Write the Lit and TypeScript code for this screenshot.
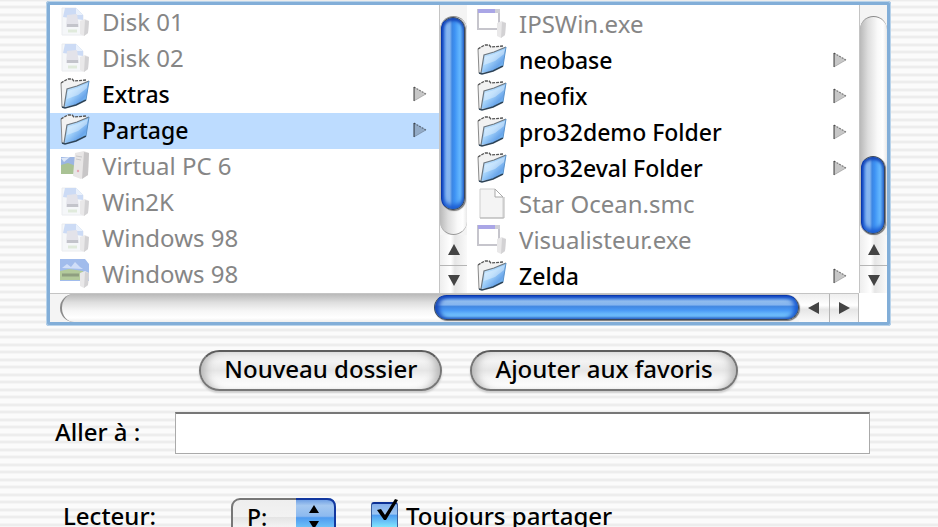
import { LitElement, html, css, svg, nothing } from "lit";
import { customElement, property } from "lit/decorators.js";

type IconKind = "folder" | "disk" | "machine" | "picture" | "program" | "file";

interface Entry {
  name: string;
  icon: IconKind;
  selected?: boolean;
}

const LEFT: Entry[] = [
  { name: "Disk 01", icon: "disk" },
  { name: "Disk 02", icon: "disk" },
  { name: "Extras", icon: "folder" },
  { name: "Partage", icon: "folder", selected: true },
  { name: "Virtual PC 6", icon: "machine" },
  { name: "Win2K", icon: "disk" },
  { name: "Windows 98", icon: "disk" },
  { name: "Windows 98", icon: "picture" },
];

const RIGHT: Entry[] = [
  { name: "IPSWin.exe", icon: "program" },
  { name: "neobase", icon: "folder" },
  { name: "neofix", icon: "folder" },
  { name: "pro32demo Folder", icon: "folder" },
  { name: "pro32eval Folder", icon: "folder" },
  { name: "Star Ocean.smc", icon: "file" },
  { name: "Visualisteur.exe", icon: "program" },
  { name: "Zelda", icon: "folder" },
];

const tower = svg`
  <path d="M20 15l5-2 4 2-1 12-4 3-4-2z" fill="#e9e8e9"/>
  <path d="M25 14l4 1-1 12-4 3z" fill="#d3d2d4"/>`;

const ICONS = {
  folder: svg`
    <path d="M2 29L1 5l3-2 4-2h4l2 2 12-1v4L9 10 5 30z" fill="#f2f2f2"/>
    <path d="M2 29L1 5" fill="none" stroke="#8a8a8a"/>
    <path d="M1 5l3-2 4-2h4l2 2 12-1" fill="none" stroke="#555" stroke-width="1.3" stroke-dasharray="3 1"/>
    <path d="M4 29L7 11l10-3L29 3l-3 19-10 5z" fill="url(#folderFill)"/>
    <path d="M8 13l9-3 11-5-1 5-9 7-11 4z" fill="#fff" opacity=".35"/>
    <path d="M4 29L7 11l10-3L29 3" fill="none" stroke="#6d7780" stroke-width="1.2"/>
    <path d="M2 29l3 1 11-3 10-5" fill="none" stroke="#2d4357" stroke-width="1.4"/>
    <path d="M26 22l3-19" fill="none" stroke="#5a93cc" stroke-width="1"/>`,
  disk: svg`
    <path d="M2 2h14l7 7v20H2z" fill="#f5f7f9" stroke="#eaecef" stroke-width="1"/>
    <path d="M5 2h11l7 7v5L3 11z" fill="#ccdbf5"/>
    <path d="M16 2v7h7z" fill="#eaf1fc"/>
    <path d="M7 9l10-1 2 13H6z" fill="#e3e3ea"/>
    <path d="M7 18h11v3H7z" fill="#c3c4cb"/>
    <path d="M8 25h9" stroke="#e0eadc" stroke-width="3"/>
    ${tower}`,
  machine: svg`
    <path d="M1 7h15v17H1z" fill="#9bb5e3"/>
    <path d="M1 15l7-2 8 3v8H1z" fill="#a9c294"/>
    <path d="M1 8l9-1-6 5z" fill="#dbe6f7"/>
    <path d="M15 3l9-2 5 2-1 22-7 4-8-3z" fill="#e8e6e6"/>
    <path d="M24 2l5 1-1 22-6 4z" fill="#c8c6c7"/>
    <path d="M16 6l6 1M16 9l5 1" stroke="#c9c8c9"/>
    <circle cx="18" cy="21" r="1.2" fill="#e6a5b2"/>`,
  picture: svg`
    <path d="M0 1h25l4 5v17H0z" fill="#a1bcec"/>
    <path d="M0 13l9-2 14 2v9H0z" fill="#b3ca9b"/>
    <path d="M2 10l5-4 4 3 4-5 5 5 3 2z" fill="#d0def8"/>
    <path d="M2 17h17" stroke="#8f9f80" stroke-width="3"/>
    ${tower}`,
  program: svg`
    <path d="M1 2h21v19H1z" fill="#fff" stroke="#c6c5cc" stroke-width="2"/>
    <path d="M1 1h17v4H1z" fill="#aaa6e6"/>
    <path d="M18 1h5v4h-5z" fill="#cfcfd6"/>
    ${tower}`,
  file: svg`
    <path d="M3 1h15l8 8v21H3z" fill="#f4f4f4" stroke="#cdcdcd" stroke-width="1"/>
    <path d="M18 1v8h8z" fill="#fff" stroke="#a9a9a9" stroke-width="1"/>
    <path d="M3 30h24V9" fill="none" stroke="#b5b5b5" stroke-width="1"/>`,
};

@customElement("file-column")
export class FileColumn extends LitElement {
  @property({ attribute: false }) entries: Entry[] = [];
  @property() label = "";

  static styles = css`
    :host { display: block; min-width: 0; background: #fff; }
    .list { list-style: none; margin: 0; padding: 0; }
    .row {
      display: flex; align-items: center; box-sizing: border-box; width: 100%; height: 36px;
      margin: 0; padding: 0 8px 2px 10px; border: 0; background: none; text-align: left;
      font: 500 23px/32px "Noto Sans", "Open Sans", sans-serif; color: #000;
    }
    .row:disabled { color: #868686; font-weight: 400; font-size: 24px; }
    .selected { background: #bddcff; }
    .icon { width: 30px; height: 32px; flex: none; margin-right: 12px; }
    .name { flex: 1; white-space: nowrap; overflow: hidden; }
    .arrow { width: 20px; height: 16px; flex: none; }
  `;

  render() {
    return html`<ul class="list" aria-label=${this.label}>
      ${this.entries.map((e) => {
        const open = e.icon === "folder";
        return html`<li>
          <button class="row ${e.selected ? "selected" : ""}" ?disabled=${!open} aria-current=${e.selected ? "true" : nothing}>
            <svg class="icon" viewBox="0 0 30 32" aria-hidden="true">
              <defs>
                <linearGradient id="folderFill" x1="0" y1="0" x2="1" y2="1">
                  <stop offset=".1" stop-color="#d5eeff"/>
                  <stop offset=".45" stop-color="#a3d2fb"/>
                  <stop offset=".7" stop-color="#69a5ea"/>
                  <stop offset="1" stop-color="#8fe0ff"/>
                </linearGradient>
              </defs>
              ${ICONS[e.icon]}
            </svg>
            <span class="name">${e.name}</span>
            ${open
              ? html`<svg class="arrow" viewBox="0 0 20 16" aria-hidden="true">
                  <path d="M3 1l12 7-12 7z" fill="#000" fill-opacity=".22"/>
                  <path d="M3 1v14" stroke="#000" stroke-opacity=".5" stroke-width="1.5"/>
                  <path d="M3 1l12 7" stroke="#000" stroke-opacity=".45" stroke-width="1.3" stroke-dasharray="2 1"/>
                  <path d="M3 15l12-7" stroke="#000" stroke-opacity=".2"/>
                </svg>`
              : nothing}
          </button>
        </li>`;
      })}
    </ul>`;
  }
}

@customElement("aqua-scrollbar")
export class AquaScrollbar extends LitElement {
  @property({ reflect: true }) direction: "vertical" | "horizontal" = "vertical";
  /** Thumb position and length, in percent of the track. */
  @property({ type: Number }) start = 0;
  @property({ type: Number }) size = 50;

  static styles = css`
    :host { display: flex; flex-direction: column; box-sizing: border-box; width: 28px; height: 100%; background: #f4f4f4; border-left: 1px solid #c4c4c4; }
    :host([direction="horizontal"]) { flex-direction: row; width: auto; height: 29px; border-left: 0; border-top: 1px solid #c4c4c4; }
    .track { flex: 1; margin-top: 11px; position: relative; border-radius: 14px; border-top: 1px solid #8b8b8b; border-bottom: 1px solid #999; background: linear-gradient(90deg, #b9b9b9, #dedede 30%, #f9f9f9 65%, #fff 85%, #e9e9e9); }
    :host([direction="horizontal"]) .track { margin: 0 0 0 10px; border: 0; border-left: 2px solid #8b8b8b; background: linear-gradient(#b9b9b9, #dedede 30%, #f6f6f6 60%, #fff 85%, #eee); }
    .thumb {
      position: absolute; box-sizing: border-box; left: 1px; right: 2px; border-radius: 13px; border: 1px solid #39465b; border-left-color: #0838ad;
      background: linear-gradient(90deg, #0d3bc0, #5d96e6 12%, #86b5f0 22%, #83b4ef 36%, #3c86e3 46%, #3d92f4 58%, #67baff 82%, #4b8ed6);
      box-shadow: inset 0 3px 3px #1748b9, inset 0 -4px 4px #1c5dd2, 1px 1px 1px #777;
    }
    :host([direction="horizontal"]) .thumb {
      left: auto; right: auto; top: 1px; bottom: 2px; border-color: #0838ad #39465b #39465b;
      background: linear-gradient(#0d3bc0, #5d96e6 12%, #90bcee 22%, #86b5ef 38%, #4288e2 46%, #4a99f5 62%, #7bcbff 88%, #5da4e0);
      box-shadow: inset 4px 0 4px #1748b9, inset -4px 0 4px #1c5dd2, 1px 1px 1px #777;
    }
    .step { display: flex; align-items: center; justify-content: center; padding: 0; margin: 0; border: 0; width: 100%; height: 30px; background: linear-gradient(90deg, #eee, #fff 40%, #e6e6e6 55%, #fafafa); }
    .step + .step { border-top: 1px solid #b5b5b5; border-bottom: 1px solid #ccc; }
    :host([direction="horizontal"]) .step { width: 30px; height: 100%; background: linear-gradient(#eee, #fff 40%, #e6e6e6 55%, #fafafa); }
    :host([direction="horizontal"]) .step + .step { border-top: 0; border-bottom: 0; border-left: 1px solid #b5b5b5; border-right: 1px solid #bbb; }
    .glyph { width: 12px; height: 12px; }
  `;

  render() {
    const v = this.direction === "vertical";
    const place = v
      ? `top:${this.start}%;height:${this.size}%`
      : `left:${this.start}%;width:${this.size}%`;
    return html`
      <div class="track"><div class="thumb" style=${place}></div></div>
      <button class="step" aria-label=${v ? "Haut" : "Gauche"}>
        <svg class="glyph" viewBox="0 0 12 12"><path fill="#444" d=${v ? "M6 0l6 11H0z" : "M0 6l11-6v12z"}/></svg>
      </button>
      <button class="step" aria-label=${v ? "Bas" : "Droite"}>
        <svg class="glyph" viewBox="0 0 12 12"><path fill="#444" d=${v ? "M6 12L0 1h12z" : "M12 6L1 0v12z"}/></svg>
      </button>`;
  }
}

@customElement("app-root")
export class AppRoot extends LitElement {
  static styles = css`
    :host {
      display: block; box-sizing: border-box; height: 100vh; overflow: hidden; padding: 1px 47px 0 46px;
      font: 500 24px/32px "Noto Sans", "Open Sans", sans-serif; color: #000;
      background: repeating-linear-gradient(#ededed 0 1px, #f5f5f5 1px 2px, #fbfbfb 2px 5px, #f5f5f5 5px 6px, #ededed 6px 8px, #f5f5f5 8px 9px, #fbfbfb 9px 13px, #f4f4f4 13px 14px, #ededed 14px 15px);
    }
    .browser { border: 4px solid #82aed8; border-radius: 3px; background: #fff; outline: 1px solid #b9d3ea; outline-offset: -1px; }
    .columns { display: grid; grid-template-columns: minmax(0, 389fr) 28px minmax(0, 392fr) 28px; height: 288px; overflow: hidden; }
    .second { padding-top: 2px; }
    .bottom { display: grid; grid-template-columns: 1fr 28px; }
    .actions { display: flex; justify-content: center; gap: 28px; margin-top: 24px; }
    .push {
      box-sizing: border-box; height: 41px; padding: 0 23px 4px; border: 2px solid #777; border-top-color: #5c5c5c; border-radius: 21px; font: inherit; color: #000; white-space: nowrap;
      background: linear-gradient(#e6e6e6, #f3f3f3 25%, #e6e6e6 50%, #f5f5f5 70%, #fff);
      box-shadow: inset 9px 0 8px -5px #b5b5b5, inset -9px 0 8px -5px #b5b5b5, 0 2px 2px #ccc;
    }
    .goto { display: flex; align-items: center; margin: 21px 21px 0 9px; }
    .goto-label { width: 120px; flex: none; padding-bottom: 2px; }
    .path { flex: 1; min-width: 0; box-sizing: border-box; height: 42px; padding: 0 8px; font: inherit; background: #fff; border: 1px solid #aaa; border-top: 2px solid #777; border-radius: 0; }
    .share { display: flex; align-items: center; margin: 44px 0 0 17px; height: 38px; }
    .drive-label { width: 168px; flex: none; padding-bottom: 2px; }
    .drive { position: relative; width: 105px; height: 38px; margin-right: 35px; }
    .select { appearance: none; box-sizing: border-box; width: 100%; height: 100%; margin: 0; padding: 0 44px 0 14px; font: inherit; font-size: 23px; color: #000; border: 2px solid #777; border-radius: 9px; background: linear-gradient(#eee, #f2f2f2 50%, #e4e4e4 51%, #fff); }
    .cap { position: absolute; top: 0; right: 0; width: 40px; height: 38px; pointer-events: none; }
    .always { display: flex; align-items: center; gap: 8px; padding-bottom: 2px; }
    .tick { position: relative; width: 27px; height: 28px; }
    .box { appearance: none; box-sizing: border-box; display: block; width: 27px; height: 28px; margin: 0; border: 1px solid #3a5e9c; border-top: 2px solid #0b2f94; border-radius: 3px; background: linear-gradient(#84aeea, #9cc5f2 40%, #4d9cf0 45%, #8af0ff); }
    .mark { position: absolute; left: 4px; top: -4px; width: 26px; height: 28px; pointer-events: none; }
  `;

  render() {
    return html`
      <section class="browser">
        <div class="columns">
          <file-column label="Dossier parent" .entries=${LEFT}></file-column>
          <aqua-scrollbar start="0" size="89"></aqua-scrollbar>
          <file-column class="second" label="Partage" .entries=${RIGHT}></file-column>
          <aqua-scrollbar start="64" size="36"></aqua-scrollbar>
        </div>
        <div class="bottom">
          <aqua-scrollbar direction="horizontal" start="50.5" size="49.5"></aqua-scrollbar>
        </div>
      </section>
      <div class="actions">
        <button class="push">Nouveau dossier</button>
        <button class="push">Ajouter aux favoris</button>
      </div>
      <div class="goto">
        <label class="goto-label" for="path">Aller à :</label>
        <input class="path" id="path" type="text" />
      </div>
      <div class="share">
        <label class="drive-label" for="drive">Lecteur:</label>
        <div class="drive">
          <select class="select" id="drive"><option>P:</option></select>
          <svg class="cap" viewBox="0 0 40 38" aria-hidden="true">
            <defs>
              <linearGradient id="capFill" x1="0" y1="0" x2="0" y2="1">
                <stop offset="0" stop-color="#5f93e0"/>
                <stop offset=".2" stop-color="#a5c8f0"/>
                <stop offset=".48" stop-color="#8cb9ef"/>
                <stop offset=".52" stop-color="#4f9bf0"/>
                <stop offset="1" stop-color="#8ae4ff"/>
              </linearGradient>
            </defs>
            <path d="M0 0h31q9 0 9 9v20q0 9-9 9H0z" fill="url(#capFill)"/>
            <path d="M0 1h31q8 0 8 8v20q0 8-8 8" fill="none" stroke="#1238a0" stroke-width="2"/>
            <path d="M18 7l5 8H13zM18 31l-5-8h10z" fill="#000"/>
          </svg>
        </div>
        <label class="always">
          <span class="tick">
            <input class="box" type="checkbox" checked />
            <svg class="mark" viewBox="0 0 26 28" aria-hidden="true">
              <path d="M2 12l4-1 4 6L20 1l3 1-12 20H9z" fill="#000"/>
            </svg>
          </span>
          Toujours partager
        </label>
      </div>`;
  }
}
